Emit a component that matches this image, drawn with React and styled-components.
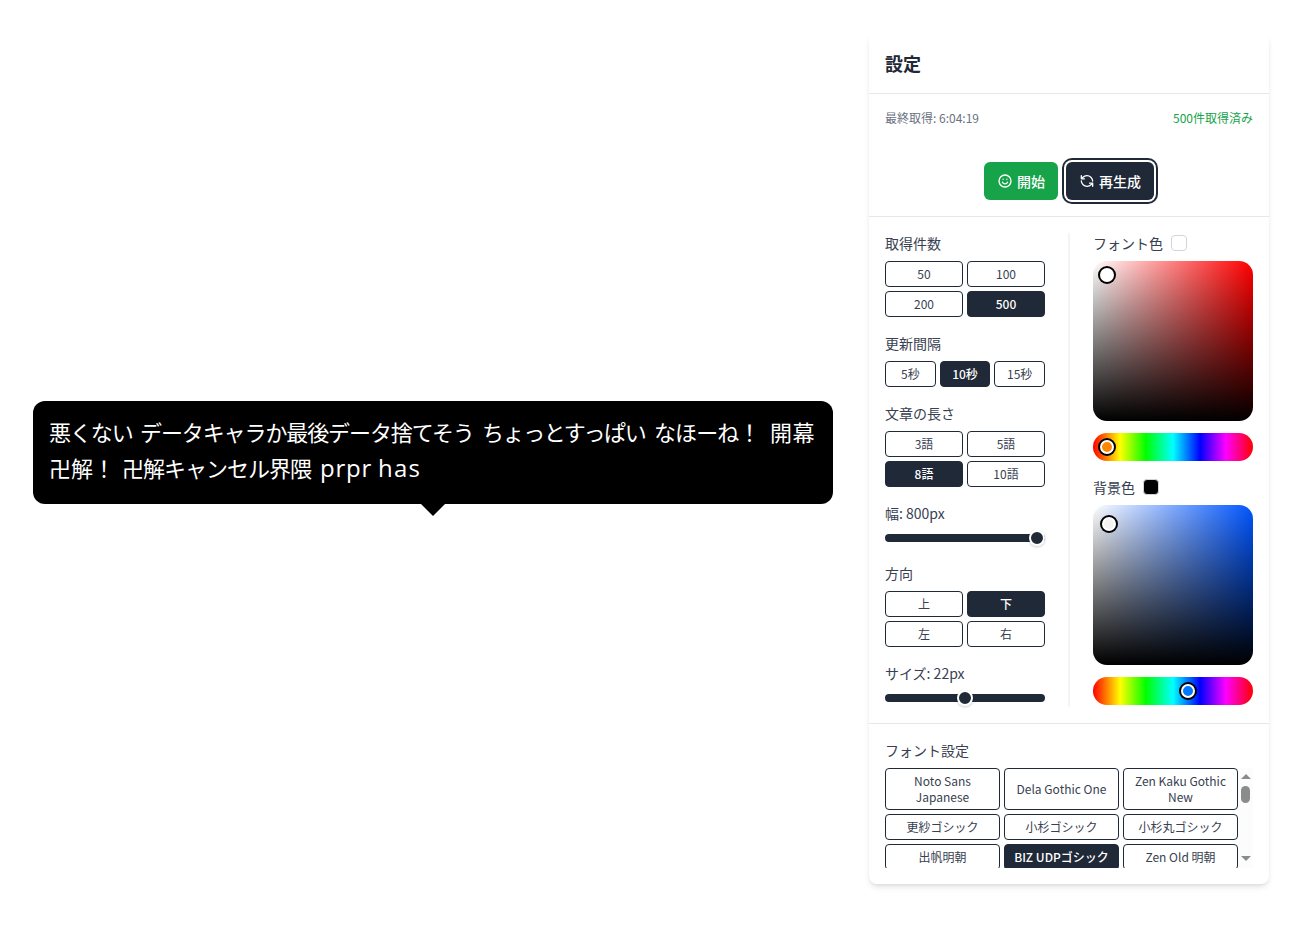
import React, { useState } from 'react';
import styled, { createGlobalStyle } from 'styled-components';

const GlobalStyle = createGlobalStyle`
    *, *::before, *::after {
        box-sizing: border-box;
    }

    body {
        margin: 0;
        height: 929px;
        overflow: hidden;
        background: #fff;
        color: #374151;
        font-family: 'Noto Sans CJK JP', sans-serif;
    }

    button {
        font-family: inherit;
        cursor: pointer;
    }
`;

const Page = styled.main`
    display: flex;
    align-items: flex-start;
    gap: 36px;
    padding: 33px 20px 0 33px;
`;

const Stage = styled.section`
    flex: none;
    width: 800px;
    height: 851px;
    display: flex;
    flex-direction: column;
    align-items: center;
    padding-top: 368px;
`;

const Bubble = styled.div`
    width: 100%;
    height: 103px;
    padding: 12px 16px;
    border-radius: 12px;
    background: ${({ $background }) => $background};
    color: ${({ $color }) => $color};
    font-size: ${({ $size }) => $size}px;
    line-height: 36px;
`;

const Line = styled.div`
    display: flex;
    align-items: baseline;
    height: 36px;
    white-space: pre;
`;

const Word = styled.span`
    flex: none;
    width: ${({ $width }) => $width}px;
    letter-spacing: ${({ $spacing }) => $spacing || 0}px;
    font-family: ${({ $latin }) => $latin ? "'Open Sans', sans-serif" : 'inherit'};
    font-size: ${({ $latin }) => $latin ? '1.09em' : '1em'};
`;

const Arrow = styled.div`
    border: 12px solid transparent;
    border-bottom: none;
    border-top-color: ${({ $background }) => $background};
`;

const Panel = styled.aside`
    flex: none;
    width: 400px;
    border-radius: 8px;
    background: #fff;
    box-shadow: 0 4px 6px -1px rgba(0,0,0,0.1), 0 2px 4px -2px rgba(0,0,0,0.1);
`;

const Header = styled.header`
    padding: 16px;
    border-bottom: 1px solid #e5e7eb;
`;

const Title = styled.h2`
    margin: 0;
    color: #1f2937;
    font-size: 18px;
    line-height: 28px;
    font-weight: 700;
`;

const Status = styled.div`
    display: flex;
    justify-content: space-between;
    padding: 16px 16px 0;
    color: #6b7280;
    font-size: 12px;
    line-height: 16px;
`;

const Fetched = styled.span`
    color: #16a34a;
`;

const Actions = styled.div`
    display: flex;
    justify-content: center;
    gap: 8px;
    padding: 36px 16px 16px;
    border-bottom: 1px solid #e5e7eb;
`;

const ActionButton = styled.button`
    display: flex;
    align-items: center;
    gap: 4px;
    height: 38px;
    padding: 0 13px;
    border: none;
    outline: none;
    border-radius: 6px;
    background: ${({ $primary }) => $primary ? '#16a34a' : '#1f2937'};
    color: #fff;
    font-size: 14px;
    line-height: 20px;
    font-weight: 500;
    box-shadow: ${({ $focused }) => $focused ? '0 0 0 2px #fff, 0 0 0 4px #1f2937' : 'none'};
`;

const Icon = styled.svg`
    width: 16px;
    height: 16px;
    fill: none;
    stroke: currentColor;
    stroke-width: 2;
    stroke-linecap: round;
    stroke-linejoin: round;
`;

const Columns = styled.div`
    display: flex;
    padding: 16px;
    border-bottom: 1px solid #e5e7eb;
`;

const Column = styled.div`
    display: flex;
    flex-direction: column;
    gap: 16px;
    width: 184px;
    padding: ${({ $right }) => $right ? '0 0 0 24px' : '0 24px 0 0'};
    box-shadow: ${({ $right }) => $right ? '-1px 0 0 #f3f4f6, inset 1px 0 0 #f3f4f6' : 'none'};
`;

const Label = styled.div`
    display: flex;
    align-items: center;
    gap: 8px;
    height: 20px;
    margin-bottom: 8px;
    font-size: 14px;
    line-height: 20px;
`;

const Swatch = styled.span`
    width: 16px;
    height: 16px;
    border: 1px solid #d1d5db;
    border-radius: 4px;
    background: ${({ $color }) => $color};
`;

const Options = styled.div`
    display: grid;
    grid-template-columns: repeat(${({ $columns }) => $columns}, 1fr);
    gap: 4px;
`;

const Option = styled.button`
    min-height: 26px;
    padding: 4px 8px;
    border: 1px solid #1f2937;
    border-radius: 4px;
    background: ${({ $active }) => $active ? '#1f2937' : '#fff'};
    color: ${({ $active }) => $active ? '#fff' : '#374151'};
    font-size: 12px;
    line-height: 16px;
    font-weight: ${({ $active }) => $active ? 500 : 400};
`;

const Range = styled.input`
    display: block;
    appearance: none;
    width: 100%;
    height: 14px;
    margin: 0 0 2px;
    background: none;

    &::-webkit-slider-runnable-track {
        height: 8px;
        border-radius: 4px;
        background: #1f2937;
    }

    &::-webkit-slider-thumb {
        appearance: none;
        width: 16px;
        height: 16px;
        margin-top: -4px;
        border: 2px solid #fff;
        border-radius: 50%;
        background: #1f2937;
        box-shadow: 0 1px 3px rgba(0,0,0,0.2);
    }
`;

const Saturation = styled.div`
    position: relative;
    height: 160px;
    margin-bottom: 12px;
    border-radius: 14px;
    background:
        linear-gradient(to top, #000, transparent),
        linear-gradient(to right, #fff, transparent),
        ${({ $hue }) => $hue};
`;

const Hue = styled.div`
    position: relative;
    height: 28px;
    border-radius: 14px;
    background: linear-gradient(to right, #f00 0%, #ff0 17%, #0f0 33%, #0ff 50%, #00f 67%, #f0f 83%, #f00 100%);
`;

// The knob lies on the gradient, centred on the picked point
const Knob = styled.span`
    position: absolute;
    left: ${({ $x }) => $x}px;
    top: ${({ $y }) => $y}px;
    width: 14px;
    height: 14px;
    margin: -7px 0 0 -7px;
    border: 2px solid #fff;
    border-radius: 50%;
    background: ${({ $color }) => $color};
    box-shadow: 0 0 0 2px #000;
`;

const FontSection = styled.div`
    padding: 16px;
`;

const FontArea = styled.div`
    display: flex;
    height: 100px;
    overflow: hidden;
`;

const FontGrid = styled(Options)`
    flex: 1;
    grid-auto-rows: min-content;
`;

const Scrollbar = styled.div`
    display: flex;
    flex-direction: column;
    align-items: center;
    width: 15px;
    padding: 6px 0 7px;
    background: #fcfcfc;
`;

const ScrollArrow = styled.span`
    border: 5px solid transparent;
    border-${({ $up }) => $up ? 'top' : 'bottom'}: none;
    border-${({ $up }) => $up ? 'bottom' : 'top'}-color: #8b8b8b;
`;

const ScrollThumb = styled.span`
    width: 9px;
    height: 17px;
    margin: 7px 0 auto;
    border-radius: 5px;
    background: #8b8b8b;
`;

const fonts = [
    'Noto Sans Japanese', 'Dela Gothic One', 'Zen Kaku Gothic New',
    '更紗ゴシック', '小杉ゴシック', '小杉丸ゴシック',
    '出帆明朝', 'BIZ UDPゴシック', 'Zen Old 明朝'
];

const lines = [
    [
        { text: '悪くない', width: 91, spacing: -1.1 },
        { text: 'データキャラか最後データ捨てそう', width: 342, spacing: -1.1 },
        { text: 'ちょっとすっぱい', width: 172, spacing: -1.4 },
        { text: 'なほーね！', width: 116, spacing: -0.9 },
        { text: '開幕', width: 46, spacing: 0.6 }
    ],
    [
        { text: '卍解！', width: 73 },
        { text: '卍解キャンセル界隈', width: 198, spacing: -1 },
        { text: 'prpr', width: 58, spacing: 0.8, latin: true },
        { text: 'has', width: 50, spacing: 1.2, latin: true }
    ]
];

function Choices({ label, items, value, onChange, columns = 2 }) {
    return (
        <div>
            <Label>{label}</Label>
            <Options $columns={columns}>
                {items.map(item => (
                    <Option key={item} $active={item === value} onClick={() => onChange(item)}>{item}</Option>
                ))}
            </Options>
        </div>
    )
}

function ColorPicker({ label, color, hue, point, pointColor, huePosition, hueColor }) {
    return (
        <div>
            <Label>{label}<Swatch $color={color} /></Label>
            <Saturation $hue={hue}>
                <Knob $x={point[0]} $y={point[1]} $color={pointColor} />
            </Saturation>
            <Hue>
                <Knob $x={huePosition} $y={14} $color={hueColor} />
            </Hue>
        </div>
    )
}

function App() {
    const [count, setCount] = useState('500');
    const [interval, setInterval] = useState('10秒');
    const [length, setLength] = useState('8語');
    const [width, setWidth] = useState(800);
    const [direction, setDirection] = useState('下');
    const [size, setSize] = useState(22);
    const [font, setFont] = useState('BIZ UDPゴシック');

    return (
        <Page>
            <GlobalStyle />
            <Stage>
                <Bubble $background="#000" $color="#fff" $size={size}>
                    {lines.map((words, i) => (
                        <Line key={i}>
                            {words.map(({ text, width, spacing, latin }, j) => (
                                <Word key={j} $width={width} $spacing={spacing} $latin={latin}>{text}</Word>
                            ))}
                        </Line>
                    ))}
                </Bubble>
                <Arrow $background="#000" />
            </Stage>
            <Panel>
                <Header>
                    <Title>設定</Title>
                </Header>
                <Status>
                    <span>最終取得: 6:04:19</span>
                    <Fetched>500件取得済み</Fetched>
                </Status>
                <Actions>
                    <ActionButton $primary>
                        <Icon viewBox="0 0 24 24">
                            <circle cx="12" cy="12" r="9" />
                            <path d="M8.2 13.8a4.2 4.2 0 0 0 7.6 0M9.2 9.2v.2M14.8 9.2v.2" />
                        </Icon>
                        開始
                    </ActionButton>
                    <ActionButton $focused>
                        <Icon viewBox="0 0 24 24">
                            <path d="M20.5 12A8.5 8.5 0 0 0 12 4a9.2 9.2 0 0 0-6.5 2.6L3.5 8.7M3.5 4v4.7h4.7M3.5 12a8.5 8.5 0 0 0 8.5 8 9.2 9.2 0 0 0 6.5-2.6l2-2.1M15.8 15.3h4.7V20" />
                        </Icon>
                        再生成
                    </ActionButton>
                </Actions>
                <Columns>
                    <Column>
                        <Choices label="取得件数" items={['50', '100', '200', '500']} value={count} onChange={setCount} />
                        <Choices label="更新間隔" items={['5秒', '10秒', '15秒']} value={interval} onChange={setInterval} columns={3} />
                        <Choices label="文章の長さ" items={['3語', '5語', '8語', '10語']} value={length} onChange={setLength} />
                        <div>
                            <Label>幅: {width}px</Label>
                            <Range type="range" min="200" max="800" value={width} onChange={e => setWidth(+e.target.value)} />
                        </div>
                        <Choices label="方向" items={['上', '下', '左', '右']} value={direction} onChange={setDirection} />
                        <div>
                            <Label>サイズ: {size}px</Label>
                            <Range type="range" min="12" max="32" value={size} onChange={e => setSize(+e.target.value)} />
                        </div>
                    </Column>
                    <Column $right>
                        <ColorPicker
                            label="フォント色"
                            color="#fff"
                            hue="#f00"
                            point={[14, 14]}
                            pointColor="#fff"
                            huePosition={14}
                            hueColor="#ff8600"
                        />
                        <ColorPicker
                            label="背景色"
                            color="#000"
                            hue="#0055ff"
                            point={[15.5, 18.5]}
                            pointColor="#f3f3f3"
                            huePosition={94.5}
                            hueColor="#0077ff"
                        />
                    </Column>
                </Columns>
                <FontSection>
                    <Label>フォント設定</Label>
                    <FontArea>
                        <FontGrid $columns={3}>
                            {fonts.map(name => (
                                <Option key={name} $active={name === font} onClick={() => setFont(name)}>{name}</Option>
                            ))}
                        </FontGrid>
                        <Scrollbar>
                            <ScrollArrow $up />
                            <ScrollThumb />
                            <ScrollArrow />
                        </Scrollbar>
                    </FontArea>
                </FontSection>
            </Panel>
        </Page>
    )
}

export default App;
